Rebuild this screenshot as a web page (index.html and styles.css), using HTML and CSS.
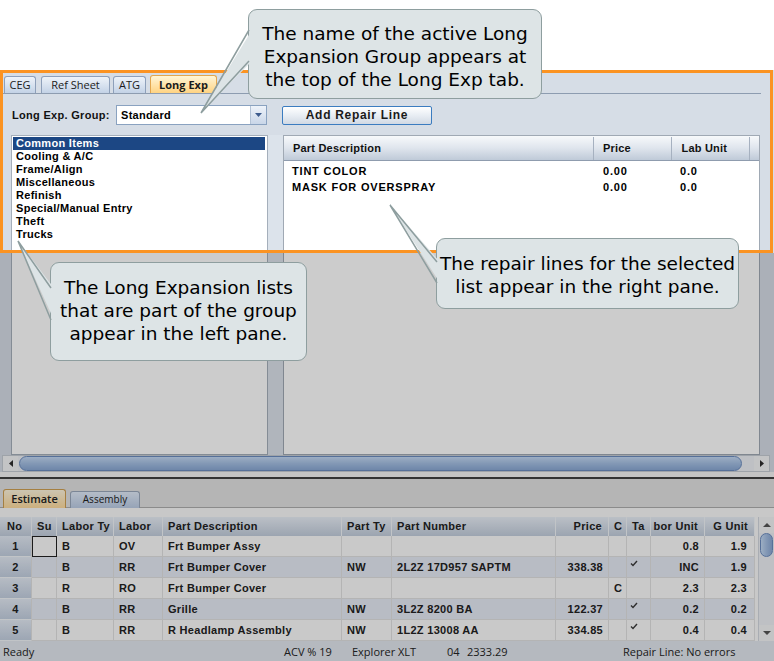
FILE: index.html
```html
<!DOCTYPE html>
<html>
<head>
    <meta charset="utf-8">
    <title>Long Exp</title>
    <link rel="stylesheet" href="styles.css">
</head>
<body>
<div class="page">
    <div class="top-space"></div>

    <div class="app">
        <div class="tabpage">
            <div class="tabs">
                <div class="tab tab-ceg">CEG</div>
                <div class="tab tab-ref">Ref Sheet</div>
                <div class="tab tab-atg">ATG</div>
                <div class="tab tab-long active">Long Exp</div>
            </div>

            <div class="toolbar">
                <span class="group-label">Long Exp. Group:</span>
                <div class="combo">
                    <span class="combo-text">Standard</span>
                    <span class="combo-btn"><svg width="7" height="4" viewBox="0 0 7 4"><path d="M0 0H7L3.5 4Z" fill="#3d5b8d"/></svg></span>
                </div>
                <button class="add-btn">Add Repair Line</button>
            </div>

            <div class="panes">
                <ul class="list">
                    <li class="sel">Common Items</li>
                    <li>Cooling &amp; A/C</li>
                    <li>Frame/Align</li>
                    <li>Miscellaneous</li>
                    <li>Refinish</li>
                    <li>Special/Manual Entry</li>
                    <li>Theft</li>
                    <li>Trucks</li>
                </ul>
                <div class="splitter"></div>
                <div class="grid">
                    <div class="grid-head">
                        <div class="gh g-desc">Part Description</div>
                        <div class="gh g-price">Price</div>
                        <div class="gh g-lab">Lab Unit</div>
                        <div class="gh g-end"></div>
                    </div>
                    <div class="grid-body">
                        <div class="grid-row">
                            <div class="g-desc">TINT COLOR</div>
                            <div class="g-price">0.00</div>
                            <div class="g-lab">0.0</div>
                        </div>
                        <div class="grid-row">
                            <div class="g-desc">MASK FOR OVERSPRAY</div>
                            <div class="g-price">0.00</div>
                            <div class="g-lab">0.0</div>
                        </div>
                    </div>
                </div>
            </div>
        </div>

        <div class="hscroll">
            <div class="harrow"><svg width="4" height="7" viewBox="0 0 4 7"><path d="M4 0V7L0 3.5Z" fill="#2e2e2e"/></svg></div>
            <div class="htrack"><div class="hthumb"></div></div>
            <div class="harrow"><svg width="4" height="7" viewBox="0 0 4 7"><path d="M0 0V7L4 3.5Z" fill="#2e2e2e"/></svg></div>
        </div>
        <div class="sep"></div>

        <div class="bottom">
            <div class="btabs">
                <div class="btab estimate">Estimate</div>
                <div class="btab assembly">Assembly</div>
            </div>
            <div class="table-area">
                <div class="table">
                    <div class="thead">
                        <div class="th th-no">No</div>
                        <div class="th">Su</div>
                        <div class="th">Labor Ty</div>
                        <div class="th">Labor</div>
                        <div class="th">Part Description</div>
                        <div class="th">Part Ty</div>
                        <div class="th">Part Number</div>
                        <div class="th r">Price</div>
                        <div class="th">C</div>
                        <div class="th">Ta</div>
                        <div class="th r">bor Unit</div>
                        <div class="th r">G Unit</div>
                    </div>
                    <div class="trow odd">
                        <div class="td no">1</div>
                        <div class="td focus"></div>
                        <div class="td">B</div>
                        <div class="td">OV</div>
                        <div class="td">Frt Bumper Assy</div>
                        <div class="td"></div>
                        <div class="td"></div>
                        <div class="td r"></div>
                        <div class="td"></div>
                        <div class="td"></div>
                        <div class="td r">0.8</div>
                        <div class="td r last">1.9</div>
                    </div>
                    <div class="trow even">
                        <div class="td no">2</div>
                        <div class="td"></div>
                        <div class="td">B</div>
                        <div class="td">RR</div>
                        <div class="td">Frt Bumper Cover</div>
                        <div class="td">NW</div>
                        <div class="td">2L2Z 17D957 SAPTM</div>
                        <div class="td r">338.38</div>
                        <div class="td"></div>
                        <div class="td chk"><svg width="8" height="7" viewBox="0 0 8 7"><path d="M1 3.5L3 5.5L7 1" fill="none" stroke="#3a3a3a" stroke-width="1.4"/></svg></div>
                        <div class="td r">INC</div>
                        <div class="td r last">1.9</div>
                    </div>
                    <div class="trow odd">
                        <div class="td no">3</div>
                        <div class="td"></div>
                        <div class="td">R</div>
                        <div class="td">RO</div>
                        <div class="td">Frt Bumper Cover</div>
                        <div class="td"></div>
                        <div class="td"></div>
                        <div class="td r"></div>
                        <div class="td">C</div>
                        <div class="td"></div>
                        <div class="td r">2.3</div>
                        <div class="td r last">2.3</div>
                    </div>
                    <div class="trow even">
                        <div class="td no">4</div>
                        <div class="td"></div>
                        <div class="td">B</div>
                        <div class="td">RR</div>
                        <div class="td">Grille</div>
                        <div class="td">NW</div>
                        <div class="td">3L2Z 8200 BA</div>
                        <div class="td r">122.37</div>
                        <div class="td"></div>
                        <div class="td chk"><svg width="8" height="7" viewBox="0 0 8 7"><path d="M1 3.5L3 5.5L7 1" fill="none" stroke="#3a3a3a" stroke-width="1.4"/></svg></div>
                        <div class="td r">0.2</div>
                        <div class="td r last">0.2</div>
                    </div>
                    <div class="trow odd">
                        <div class="td no">5</div>
                        <div class="td"></div>
                        <div class="td">B</div>
                        <div class="td">RR</div>
                        <div class="td">R Headlamp Assembly</div>
                        <div class="td">NW</div>
                        <div class="td">1L2Z 13008 AA</div>
                        <div class="td r">334.85</div>
                        <div class="td"></div>
                        <div class="td chk"><svg width="8" height="7" viewBox="0 0 8 7"><path d="M1 3.5L3 5.5L7 1" fill="none" stroke="#3a3a3a" stroke-width="1.4"/></svg></div>
                        <div class="td r">0.4</div>
                        <div class="td r last">0.4</div>
                    </div>
                </div>
                <div class="vscroll">
                    <div class="varrow"><svg width="8" height="4" viewBox="0 0 8 4"><path d="M0 4H8L4 0Z" fill="#555"/></svg></div>
                    <div class="vthumb"></div>
                    <div class="vspace"></div>
                    <div class="varrow"><svg width="8" height="4" viewBox="0 0 8 4"><path d="M0 0H8L4 4Z" fill="#555"/></svg></div>
                </div>
            </div>
        </div>

        <div class="status">
            <span class="st-ready">Ready</span>
            <span class="st-acv">ACV % 19</span>
            <span class="st-model">Explorer XLT</span>
            <span class="st-code">04</span>
            <span class="st-total">2333.29</span>
            <span class="st-msg">Repair Line: No errors</span>
        </div>
    </div>

    <!-- highlight of the Long Exp tab -->
    <div class="shade"></div>
    <div class="frame"></div>

    <div class="callout co-top">The name of the active Long<br>Expansion Group appears at<br>the top of the Long Exp tab.</div>
    <div class="callout co-left">The Long Expansion lists<br>that are part of the group<br>appear in the left pane.</div>
    <div class="callout co-right">The repair lines for the selected<br>list appear in the right pane.</div>

    <svg class="pointers" width="774" height="661" viewBox="0 0 774 661">
        <polygon points="252,30 252,61 201,113" fill="#dde4e6"/>
        <polyline points="249,30 201,113 249,61" fill="none" stroke="#8e9e9f" stroke-width="1.5"/>
        <polygon points="54,288 54,320 18,241" fill="#dde4e6"/>
        <polyline points="51,288 18,241 51,320" fill="none" stroke="#8e9e9f" stroke-width="1.5"/>
        <polygon points="440,262 440,283 390,205" fill="#dde4e6"/>
        <polyline points="437,262 390,205 437,283" fill="none" stroke="#8e9e9f" stroke-width="1.5"/>
    </svg>
</div>
</body>
</html>
```

FILE: styles.css
```css
* {
    box-sizing: border-box;
}
body {
    margin: 0;
    background: #fff;
}
.page {
    position: relative;
    width: 774px;
    height: 661px;
    overflow: hidden;
    background: #fff;
    font-family: "Liberation Sans", Arial, sans-serif;
    color: #111;
}
.top-space {
    height: 70px;
}
.app {
    height: 591px;
    background: #d6dde6;
}

/* top tab control */
.tabpage {
    margin-left: 3px;
    width: 758px;
}
.tabs {
    display: flex;
    align-items: flex-end;
    height: 24px;
    padding-left: 1px;
    border-bottom: 1px solid #8d9cb0;
    font-family: "Open Sans", sans-serif;
    font-size: 11px;
}
.tab {
    height: 17px;
    line-height: 15px;
    text-align: center;
    color: #1b1b1b;
    border: 1px solid #8ea0ba;
    border-bottom: none;
    border-radius: 3px 3px 0 0;
    background: linear-gradient(#eef3f9, #c3d2e6);
}
.tab-ceg { width: 32px; margin-right: 5px; }
.tab-ref { width: 69px; margin-right: 3px; }
.tab-atg { width: 33px; margin-right: 4px; }
.tab-long { width: 67px; }
.tab.active {
    height: 18px;
    line-height: 17px;
    font-weight: 700;
    border-color: #e2a64e;
    background: linear-gradient(#fff5d6, #ffd382);
}

.toolbar {
    display: flex;
    align-items: center;
    height: 20px;
    margin-top: 11px;
    padding-left: 9px;
}
.group-label {
    width: 104px;
    font-weight: bold;
    font-size: 11px;
    letter-spacing: 0.3px;
}
.combo {
    display: flex;
    align-items: center;
    width: 151px;
    height: 20px;
    border: 1px solid #8aa2c0;
    background: #fff;
}
.combo-text {
    flex: 1;
    padding-left: 4px;
    font-weight: bold;
    font-size: 11px;
    letter-spacing: 0.3px;
    color: #000;
}
.combo-btn {
    display: flex;
    align-items: center;
    justify-content: center;
    width: 16px;
    height: 18px;
    border-left: 1px solid #b4c3d6;
    background: linear-gradient(#eef3fa, #c9d6e8);
}
.add-btn {
    margin-left: 15px;
    width: 150px;
    height: 19px;
    padding: 0;
    border: 1px solid #3b7cc0;
    border-radius: 2px;
    background: linear-gradient(#ffffff, #e8edf3 50%, #d1d9e4);
    font: bold 12px "Liberation Sans", Arial, sans-serif;
    letter-spacing: 0.7px;
    color: #1a1a1a;
}

.panes {
    display: flex;
    height: 320px;
    margin-top: 10px;
    padding-left: 8px;
}
.list {
    width: 257px;
    margin: 0;
    padding: 1px;
    list-style: none;
    background: #fff;
    border: 1px solid #a5afbb;
    font-weight: bold;
    font-size: 11px;
    letter-spacing: 0.3px;
}
.list li {
    height: 13px;
    line-height: 13px;
    padding-left: 3px;
    color: #000;
}
.list li.sel {
    margin-right: 1px;
    background: #1c4784;
    color: #fff;
}
.splitter {
    width: 15px;
    background: #dce3eb;
}
.grid {
    width: 477px;
    background: #fff;
    border: 1px solid #a0a9b4;
}
.grid-head {
    display: flex;
    height: 25px;
    padding-top: 1px;
    border-bottom: 1px solid #8f9cae;
    background: linear-gradient(#f7f9fb, #dfe5ed 50%, #bfcad8);
}
.gh {
    line-height: 23px;
    padding-left: 9px;
    font-weight: bold;
    font-size: 11px;
    letter-spacing: 0.2px;
    border-right: 1px solid #a6b1c0;
}
.g-desc { width: 312px; }
.g-price { width: 79px; }
.g-lab { width: 78px; }
.gh.g-end {
    flex: 1;
    border-right: none;
}
.grid-body {
    padding-top: 2px;
}
.grid-row {
    display: flex;
    height: 16px;
    line-height: 16px;
    font-weight: bold;
    font-size: 11px;
    letter-spacing: 0.8px;
    color: #000;
}
.grid-row .g-desc { padding-left: 8px; }
.grid-row .g-price { padding-left: 7px; }
.grid-row .g-lab { padding-left: 5px; }

/* horizontal scroll bar */
.hscroll {
    display: flex;
    height: 17px;
    margin: 0 4px 0 2px;
    border: 1px solid #c6ccd4;
    background: #eef1f5;
}
.harrow {
    display: flex;
    align-items: center;
    justify-content: center;
    width: 15px;
    background: #f4f5f7;
}
.htrack {
    flex: 1;
    padding: 0 0 0 1px;
}
.hthumb {
    width: 723px;
    height: 15px;
    border: 1px solid #6c8cc0;
    border-radius: 8px;
    background: linear-gradient(#c4d9f4, #a4bfe3 50%, #8aa8d4);
}
.sep {
    height: 7px;
    background: linear-gradient(#f6f6f6 0 5px, #404040 5px 7px);
}

/* bottom estimate pane */
.bottom {
    background: #e3e3e3;
}
.btabs {
    display: flex;
    align-items: flex-end;
    height: 29px;
    padding-left: 3px;
    border-bottom: 1px solid #aeaeae;
    font-family: "Open Sans", sans-serif;
}
.btab {
    height: 17px;
    margin-bottom: -1px;
    text-align: center;
    border: 1px solid #9aa8bc;
    border-bottom: none;
    border-radius: 3px 3px 0 0;
    color: #222;
}
.btab.estimate {
    width: 63px;
    height: 19px;
    margin-right: 4px;
    line-height: 17px;
    font-size: 11px;
    font-weight: 600;
    border-color: #cf9f52;
    background: linear-gradient(#fff6de, #ffdc9e);
}
.btab.assembly {
    width: 70px;
    line-height: 15px;
    font-size: 10px;
    background: linear-gradient(#e2ecfa, #bccde6);
}
.table-area {
    display: flex;
    height: 133px;
    padding-top: 9px;
    background: #fbfbfb;
}
.table {
    width: 755px;
}
.thead,
.trow {
    display: grid;
    grid-template-columns: 32px 25px 57px 49px 179px 50px 164px 53px 18px 24px 54px 50px;
}
.thead {
    height: 19px;
    background: linear-gradient(#eaf0f8, #c3cedd);
}
.th {
    padding-left: 5px;
    line-height: 19px;
    font-weight: bold;
    font-size: 11px;
    letter-spacing: 0.3px;
    color: #222;
    white-space: nowrap;
    overflow: hidden;
    border-right: 1px solid #f2f5f9;
}
.th.th-no {
    padding-left: 7px;
}
.th.r {
    text-align: right;
    padding-left: 0;
    padding-right: 6px;
}
.trow {
    height: 21px;
}
.trow.odd { background: #fcfcfc; }
.trow.even { background: #e7ebf6; }
.td {
    padding-left: 5px;
    line-height: 20px;
    font-weight: bold;
    font-size: 11px;
    letter-spacing: 0.3px;
    color: #222;
    white-space: nowrap;
    overflow: hidden;
    border-right: 1px solid #e2e2e2;
    border-bottom: 1px solid #e2e2e2;
}
.td.no {
    padding-left: 0;
    text-align: center;
    background: linear-gradient(#e4ebf5, #c4d0e1);
    border-bottom-color: #f2f5f9;
}
.td.focus {
    border: 1px solid #222;
}
.td.r {
    text-align: right;
    padding-left: 0;
    padding-right: 5px;
}
.td.r.last {
    padding-right: 7px;
}
.td.chk {
    padding: 3px 0 0 3px;
    line-height: 0;
}
.vscroll {
    display: flex;
    flex-direction: column;
    width: 16px;
    height: 124px;
    margin-left: 3px;
    background: #eef1f5;
    border-left: 1px solid #d4d9e0;
}
.varrow {
    display: flex;
    align-items: center;
    justify-content: center;
    height: 16px;
    background: #f4f5f7;
}
.vthumb {
    height: 24px;
    margin: 0 1px;
    border: 1px solid #6c8cc0;
    border-radius: 7px;
    background: linear-gradient(90deg, #c4d9f4, #a4bfe3 50%, #8aa8d4);
}
.vspace {
    flex: 1;
}

.status {
    display: flex;
    height: 20px;
    padding-top: 1px;
    line-height: 19px;
    background: #e3e8ef;
    font-family: "Open Sans", sans-serif;
    font-size: 11px;
    color: #252525;
    white-space: nowrap;
}
.st-ready { width: 284px; padding-left: 3px; }
.st-acv { width: 68px; }
.st-model { width: 95px; }
.st-code { width: 20px; }
.st-total { width: 156px; }

/* overlay and callouts */
.shade {
    position: absolute;
    left: 0;
    top: 253px;
    width: 774px;
    height: 408px;
    background: rgba(0, 0, 0, 0.2);
    z-index: 1;
}
.frame {
    position: absolute;
    left: 0;
    top: 70px;
    width: 773px;
    height: 183px;
    border: 3px solid #fb9322;
    z-index: 2;
}
.callout {
    position: absolute;
    z-index: 3;
    background: #dde4e6;
    border: 1.5px solid #8e9e9f;
    border-radius: 9px;
    font-family: "DejaVu Sans", Verdana, sans-serif;
    font-size: 18.5px;
    line-height: 23px;
    text-align: center;
    color: #000;
    white-space: nowrap;
}
.co-top {
    left: 248px;
    top: 9px;
    width: 294px;
    height: 90px;
    padding-top: 12px;
}
.co-left {
    left: 50px;
    top: 262px;
    width: 257px;
    height: 99px;
    padding-top: 13px;
}
.co-right {
    left: 436px;
    top: 238px;
    width: 303px;
    height: 71px;
    padding-top: 13px;
}
.pointers {
    position: absolute;
    left: 0;
    top: 0;
    z-index: 4;
    pointer-events: none;
}
```
